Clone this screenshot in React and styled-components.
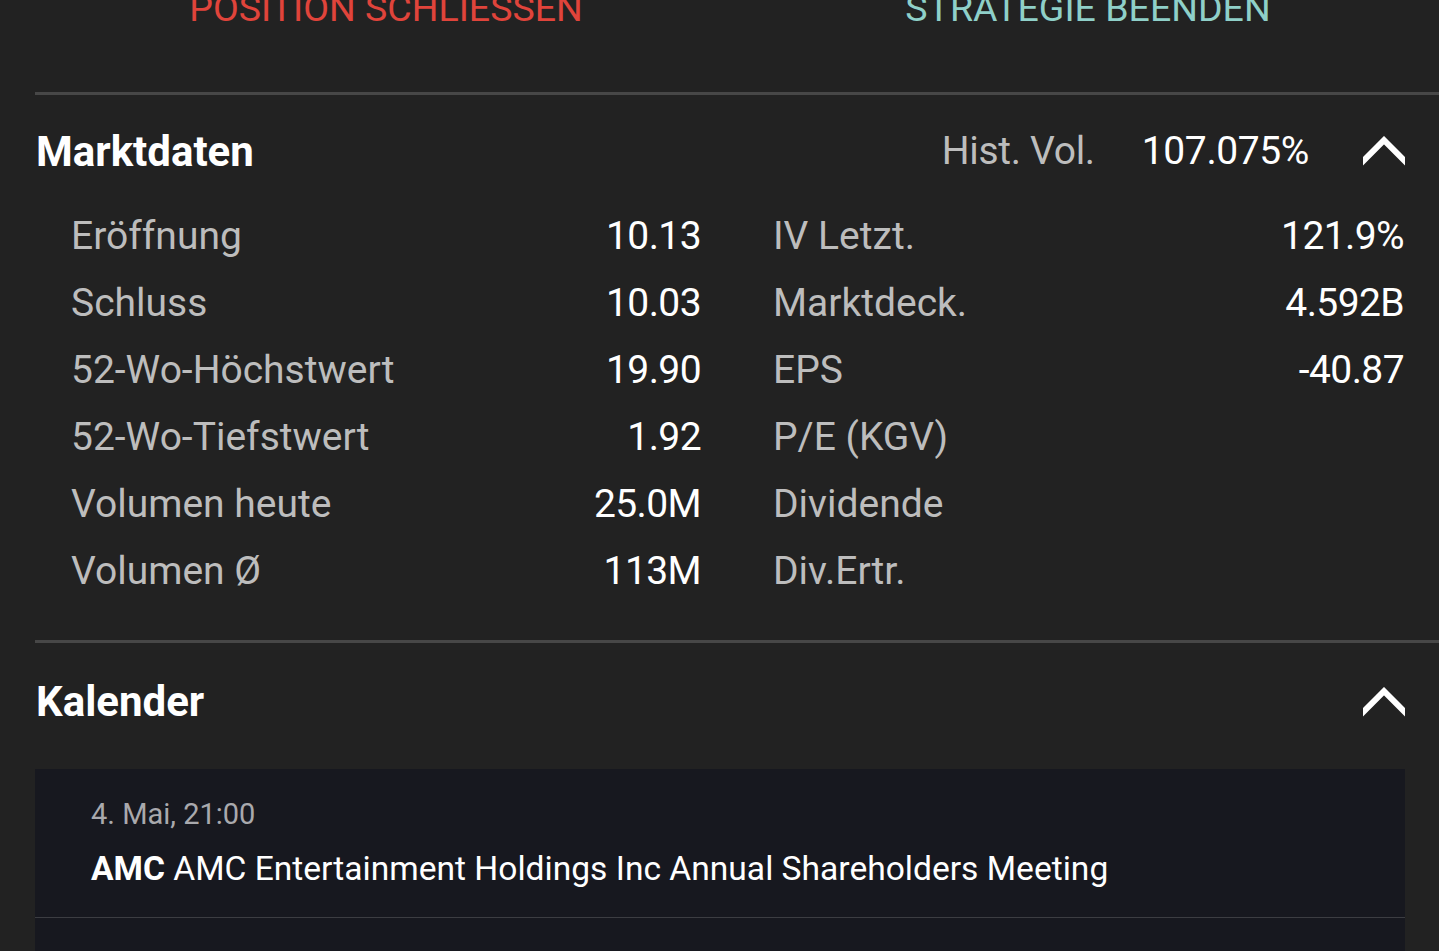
import React from 'react'
import styled, { createGlobalStyle } from 'styled-components'

const GlobalStyle = createGlobalStyle`
  html, body {
    margin: 0;
    padding: 0;
    background: #222222;
    overflow: hidden;
  }
  body {
    font-family: Roboto, "Liberation Sans", sans-serif;
    color: #ffffff;
  }
`

const UI_FONT = `Roboto, "Liberation Sans", sans-serif`

const Page = styled.div`
  width: 1439px;
  height: 951px;
  overflow: hidden;
  background: #222222;
`

const ActionBar = styled.div`
  display: grid;
  grid-template-columns: 1fr 1fr;
  height: 92px;
  margin-left: 35px;
  overflow: hidden;
`

const ActionButton = styled.button`
  all: unset;
  font-family: ${UI_FONT};
  font-size: 37.5px;
  line-height: 40px;
  margin-top: -12px;
  height: 40px;
  text-align: center;
  color: ${p => p.$color};
`

const Divider = styled.div`
  height: 3px;
  margin-left: 35px;
  background: #474747;
`

const SectionHeader = styled.div`
  box-sizing: border-box;
  display: flex;
  align-items: center;
  height: ${p => p.$height}px;
  padding: 5px 34px 0 36px;
`

const SectionTitle = styled.h2`
  margin: 0;
  flex: 1;
  font-family: ${UI_FONT};
  font-size: 42px;
  font-weight: 700;
  color: #ffffff;
`

const HeaderStat = styled.span`
  font-family: ${UI_FONT};
  font-size: 39px;
  letter-spacing: ${p => (p.$muted ? '-0.3px' : '-0.4px')};
  color: ${p => (p.$muted ? '#bdbdbd' : '#ffffff')};
  margin-right: ${p => p.$gap}px;
`

const Chevron = styled.svg`
  width: 42px;
  height: 30px;
  display: block;
  overflow: hidden;
`

const StatsGrid = styled.div`
  display: grid;
  grid-template-columns: 630px 631px;
  column-gap: 72px;
  padding: 0 35px 36px 71px;
`

const StatRow = styled.div`
  display: flex;
  align-items: center;
  justify-content: space-between;
  height: 67px;
  font-family: ${UI_FONT};
  font-size: 39px;
`

const StatLabel = styled.span`
  color: #bdbdbd;
`

const StatValue = styled.span`
  color: #ffffff;
  letter-spacing: -0.6px;
`

const Spacer = styled.div`
  height: ${p => p.$size}px;
`

const EventCard = styled.div`
  margin: 0 34px 0 35px;
  background: #17181f;
  height: 200px;
`

const EventItem = styled.div`
  padding: 28px 56px 0;
  height: 120px;
  border-bottom: 1px solid #3c3d42;
  font-family: Roboto, "Liberation Sans", sans-serif;
`

const EventTime = styled.div`
  font-size: 29px;
  color: #a9a9ad;
  line-height: 34px;
`

const EventTitle = styled.div`
  margin-top: 18px;
  font-size: 33.6px;
  line-height: 40px;
  color: #ffffff;

  b {
    font-weight: 700;
  }
`

const ChevronUp = () => (
  <Chevron viewBox="0 0 42 30">
    <polyline
      points="-3,28.2 21,4.2 45,28.2"
      fill="none"
      stroke="#ffffff"
      strokeWidth="6"
      strokeLinejoin="miter"
    />
  </Chevron>
)

const LEFT_STATS = [
  ['Eröffnung', '10.13'],
  ['Schluss', '10.03'],
  ['52-Wo-Höchstwert', '19.90'],
  ['52-Wo-Tiefstwert', '1.92'],
  ['Volumen heute', '25.0M'],
  ['Volumen Ø', '113M'],
]

const RIGHT_STATS = [
  ['IV Letzt.', '121.9%'],
  ['Marktdeck.', '4.592B'],
  ['EPS', '-40.87'],
  ['P/E (KGV)', ''],
  ['Dividende', ''],
  ['Div.Ertr.', ''],
]

const StatColumn = ({ stats }) => (
  <div>
    {stats.map(([label, value]) => (
      <StatRow key={label}>
        <StatLabel>{label}</StatLabel>
        <StatValue>{value}</StatValue>
      </StatRow>
    ))}
  </div>
)

export default function App() {
  return (
    <Page>
      <GlobalStyle />
      <ActionBar>
        <ActionButton $color="#e0443b">POSITION SCHLIESSEN</ActionButton>
        <ActionButton $color="#8fd0c9">STRATEGIE BEENDEN</ActionButton>
      </ActionBar>
      <Divider />

      <SectionHeader $height={107}>
        <SectionTitle>Marktdaten</SectionTitle>
        <HeaderStat $muted $gap={47}>Hist. Vol.</HeaderStat>
        <HeaderStat $gap={54}>107.075%</HeaderStat>
        <ChevronUp />
      </SectionHeader>
      <StatsGrid>
        <StatColumn stats={LEFT_STATS} />
        <StatColumn stats={RIGHT_STATS} />
      </StatsGrid>
      <Divider />

      <SectionHeader $height={112}>
        <SectionTitle>Kalender</SectionTitle>
        <ChevronUp />
      </SectionHeader>
      <Spacer $size={14} />
      <EventCard>
        <EventItem>
          <EventTime>4. Mai, 21:00</EventTime>
          <EventTitle>
            <b>AMC</b> AMC Entertainment Holdings Inc Annual Shareholders Meeting
          </EventTitle>
        </EventItem>
      </EventCard>
    </Page>
  )
}
